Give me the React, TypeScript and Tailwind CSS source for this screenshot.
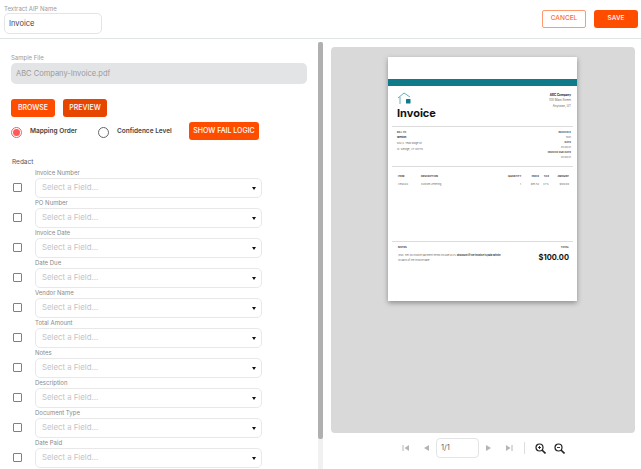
import React from "react";

const fields = ["Invoice Number","PO Number","Invoice Date","Date Due","Vendor Name","Total Amount","Notes","Description","Document Type","Date Paid"];

function Row({ label }: { label: string }) {
  return (
    <div className="flex h-[30px] items-start">
      <div className="ml-[13px] mt-[15px] h-[9px] w-[9px] shrink-0 rounded-[1px] border-[1.5px] border-[#808080]" />
      <div className="ml-[13px] w-[227px]">
        <div className="h-[10px] text-[6px] leading-[10px] text-[#8a8a8a]">{label}</div>
        <div className="flex h-[20px] items-center justify-between rounded-[5px] border border-[#e8e8e8] bg-white pl-[6px] pr-[5px]">
          <span className="text-[7.8px] text-[#c4c4c4]">Select a Field...</span>
          <svg width="4" height="3" viewBox="0 0 4 3"><path d="M0 0h4L2 3z" fill="#111" /></svg>
        </div>
      </div>
    </div>
  );
}

function Btn({ children, w, dark }: { children: React.ReactNode; w: string; dark?: boolean }) {
  return (
    <div className={`flex h-[18px] items-center justify-center rounded-[3px] text-[7px] font-medium text-white ${w} ${dark ? "bg-[#e64600]" : "bg-[#ff4d00]"}`}>{children}</div>
  );
}

function Doc() {
  return (
    <div className="ml-[57px] mt-[10px] h-[244px] w-[189px] bg-white pt-[22px] shadow-[0_2px_5px_rgba(0,0,0,0.35)]">
      <div className="h-[7px] bg-[#0f7b8a]" />
      <div className="flex h-[40px] justify-between pl-[9px] pr-[6px] pt-[6px]">
        <div>
          <svg width="15" height="13" viewBox="0 0 15 13" fill="none">
            <path d="M1 6L7 1l6 4M3 5v7" stroke="#3f9cab" strokeWidth="0.8" />
            <rect x="9" y="7" width="4.5" height="4.5" rx="0.5" fill="#0f7b8a" />
          </svg>
          <div className="mt-[1px] text-[11px] font-bold leading-[15px] text-[#111]">Invoice</div>
        </div>
        <div className="pt-[1px] text-right text-[3px] leading-[5.3px] text-[#666]">
          <div className="font-bold text-[#222]">ABC Company</div>
          <div>100 Main Street</div>
          <div>Anytown, UT</div>
        </div>
      </div>
      <div className="mx-[4px] h-px bg-[#dcdcdc]" />
      <div className="flex h-[39px] justify-between pl-[9px] pr-[6px] pt-[3px] text-[2.5px] leading-[5px] text-[#666]">
        <div>
          <div className="font-bold text-[#444]">BILL TO</div>
          <div className="font-bold text-[#222]">Weston</div>
          <div className="mt-[1px]">632 S. Teak Ridge Dr</div>
          <div className="mt-[1px]">St. George, UT 84770</div>
        </div>
        <div className="text-right">
          <div className="font-bold text-[#444]">INVOICE #</div>
          <div>1001</div>
          <div className="font-bold text-[#444]">DATE</div>
          <div>01/20/21</div>
          <div className="font-bold text-[#444]">INVOICE DUE DATE</div>
          <div>01/20/21</div>
        </div>
      </div>
      <div className="mx-[4px] h-px bg-[#dcdcdc]" />
      <div className="h-[74px] pl-[10px] pr-[8px] pt-[8px] text-[2.5px] leading-[4px] text-[#666]">
        <div className="flex font-bold text-[#333]">
          <span className="w-[23px]">ITEM</span>
          <span className="w-[87px]">DESCRIPTION</span>
          <span className="w-[13px] text-right">QUANTITY</span>
          <span className="w-[18px] text-right">PRICE</span>
          <span className="w-[10px] text-right">TAX</span>
          <span className="w-[20px] text-right">AMOUNT</span>
        </div>
        <div className="mt-[4px] flex">
          <span className="w-[23px]">VENXXX</span>
          <span className="w-[87px]">Custom Lettering</span>
          <span className="w-[13px] text-right">1</span>
          <span className="w-[18px] text-right">$95.52</span>
          <span className="w-[10px] text-right">4.7%</span>
          <span className="w-[20px] text-right">$100.00</span>
        </div>
      </div>
      <div className="mx-[4px] h-px bg-[#dcdcdc]" />
      <div className="flex justify-between pl-[10px] pr-[8px] pt-[3px]">
        <div className="text-[2.5px] leading-[5px] text-[#666]">
          <div className="mb-[3px] font-bold text-[#333]">NOTES</div>
          <div className="whitespace-nowrap">(EM): net 30 Invoice payment terms include a 2% <b className="text-[#333]">discount if the invoice is paid within</b></div>
          <div className="whitespace-nowrap">10 days of the invoice date.</div>
        </div>
        <div className="text-right">
          <div className="text-[2.5px] font-bold leading-[5px] text-[#333]">TOTAL</div>
          <div className="mt-[3px] text-[7.5px] font-bold leading-[10px] text-[#111]">$100.00</div>
        </div>
      </div>
    </div>
  );
}

function Glass({ plus }: { plus?: boolean }) {
  return (
    <svg width="11" height="11" viewBox="0 0 11 11" fill="none" stroke="#222" strokeWidth="1.2">
      <circle cx="4.5" cy="4.5" r="3.5" />
      <path d="M7 7l3.5 3.5" strokeWidth="1.6" />
      <path d={plus ? "M3 4.5h3M4.5 3v3" : "M3 4.5h3"} strokeWidth="0.9" />
    </svg>
  );
}

export default function App() {
  return (
    <div className="flex h-[469px] w-[641px] flex-col overflow-hidden bg-white font-['Inter',sans-serif]">
      <header className="flex h-[39px] shrink-0 items-start justify-between border-b border-[#dfe5e5] pl-[4px] pr-[3px]">
        <div>
          <div className="mt-[3px] h-[10px] pt-[1px] text-[6px] leading-[9px] text-[#9a9a9a]">Textract AIP Name</div>
          <div className="flex h-[21px] w-[98px] items-center rounded-[5px] border border-[#e4e4e4] pl-[4px] text-[7.5px] text-[#444]">Invoice</div>
        </div>
        <div className="mt-[10px] flex gap-[8px]">
          <div className="flex h-[18px] w-[44px] items-center justify-center rounded-[2px] border border-[#ff9a70] text-[6.5px] font-medium text-[#ff6a30]">CANCEL</div>
          <div className="flex h-[18px] w-[44px] items-center justify-center rounded-[3px] bg-[#ff4d00] text-[6.5px] font-medium text-white">SAVE</div>
        </div>
      </header>
      <main className="flex min-h-0 flex-1">
        <section className="w-[318px] shrink-0 overflow-hidden">
          <div className="ml-[11px] mt-[14px] h-[10px] text-[6px] leading-[10px] text-[#9a9a9a]">Sample File</div>
          <div className="ml-[11px] flex h-[21px] w-[296px] items-center rounded-[5px] bg-[#e3e4e6] pl-[5px] text-[7.5px] text-[#9a9a9a]">ABC Company-Invoice.pdf</div>
          <div className="ml-[11px] mt-[15px] flex gap-[8px]">
            <Btn w="w-[44px]">BROWSE</Btn>
            <Btn w="w-[44px]" dark>PREVIEW</Btn>
          </div>
          <div className="ml-[11px] mt-[5px] flex h-[18px] items-center">
            <div className="mt-[2px] flex h-[11px] w-[11px] items-center justify-center rounded-full border border-[#ff5a5a]">
              <div className="h-[7px] w-[7px] rounded-full bg-[#ff5a5a]" />
            </div>
            <span className="ml-[8px] mt-[2px] w-[68px] text-[6.5px] font-semibold text-[#444]">Mapping Order</span>
            <div className="mt-[2px] h-[11px] w-[11px] rounded-full border border-[#666]" />
            <span className="ml-[8px] mt-[2px] w-[72px] text-[6.5px] font-semibold text-[#444]">Confidence Level</span>
            <Btn w="w-[70px]">SHOW FAIL LOGIC</Btn>
          </div>
          <div className="ml-[12px] mt-[17px] h-[11px] text-[6.5px] leading-[11px] text-[#555]">Redact</div>
          <div>
            {fields.map((f) => <Row key={f} label={f} />)}
          </div>
        </section>
        <div className="mt-[3px] w-[5px] shrink-0 bg-[#f1f1f1]">
          <div className="h-[397px] rounded-[2px] bg-[#b0b0b0]" />
        </div>
        <section className="ml-[8px] w-[304px] shrink-0">
          <div className="mt-[8px] h-[386px] overflow-hidden rounded-[4px] bg-[#d9d9d9]">
            <Doc />
          </div>
          <div className="mt-[5px] flex h-[20px] items-center">
            <svg width="8" height="8" viewBox="0 0 8 8" className="ml-[71px]" fill="#b5b5b5"><path d="M0.5 1h1v6h-1zM7 1v6L2.5 4z" /></svg>
            <svg width="7" height="8" viewBox="0 0 7 8" className="ml-[13px]" fill="#b5b5b5"><path d="M6 1v6L1 4z" /></svg>
            <div className="ml-[6px] flex h-[20px] w-[43px] items-center rounded-[4px] border border-[#e4e4e4] pl-[4px] text-[7.5px] text-[#666]">1/1</div>
            <svg width="7" height="8" viewBox="0 0 7 8" className="ml-[6px]" fill="#b5b5b5"><path d="M1 1v6l5-3z" /></svg>
            <svg width="8" height="8" viewBox="0 0 8 8" className="ml-[13px]" fill="#b5b5b5"><path d="M1 1v6l4.5-3zM6.5 1h1v6h-1z" /></svg>
            <div className="ml-[11px] h-[12px] w-px bg-[#ddd]" />
            <div className="ml-[10px] flex gap-[8px]"><Glass plus /><Glass /></div>
          </div>
        </section>
      </main>
    </div>
  );
}
